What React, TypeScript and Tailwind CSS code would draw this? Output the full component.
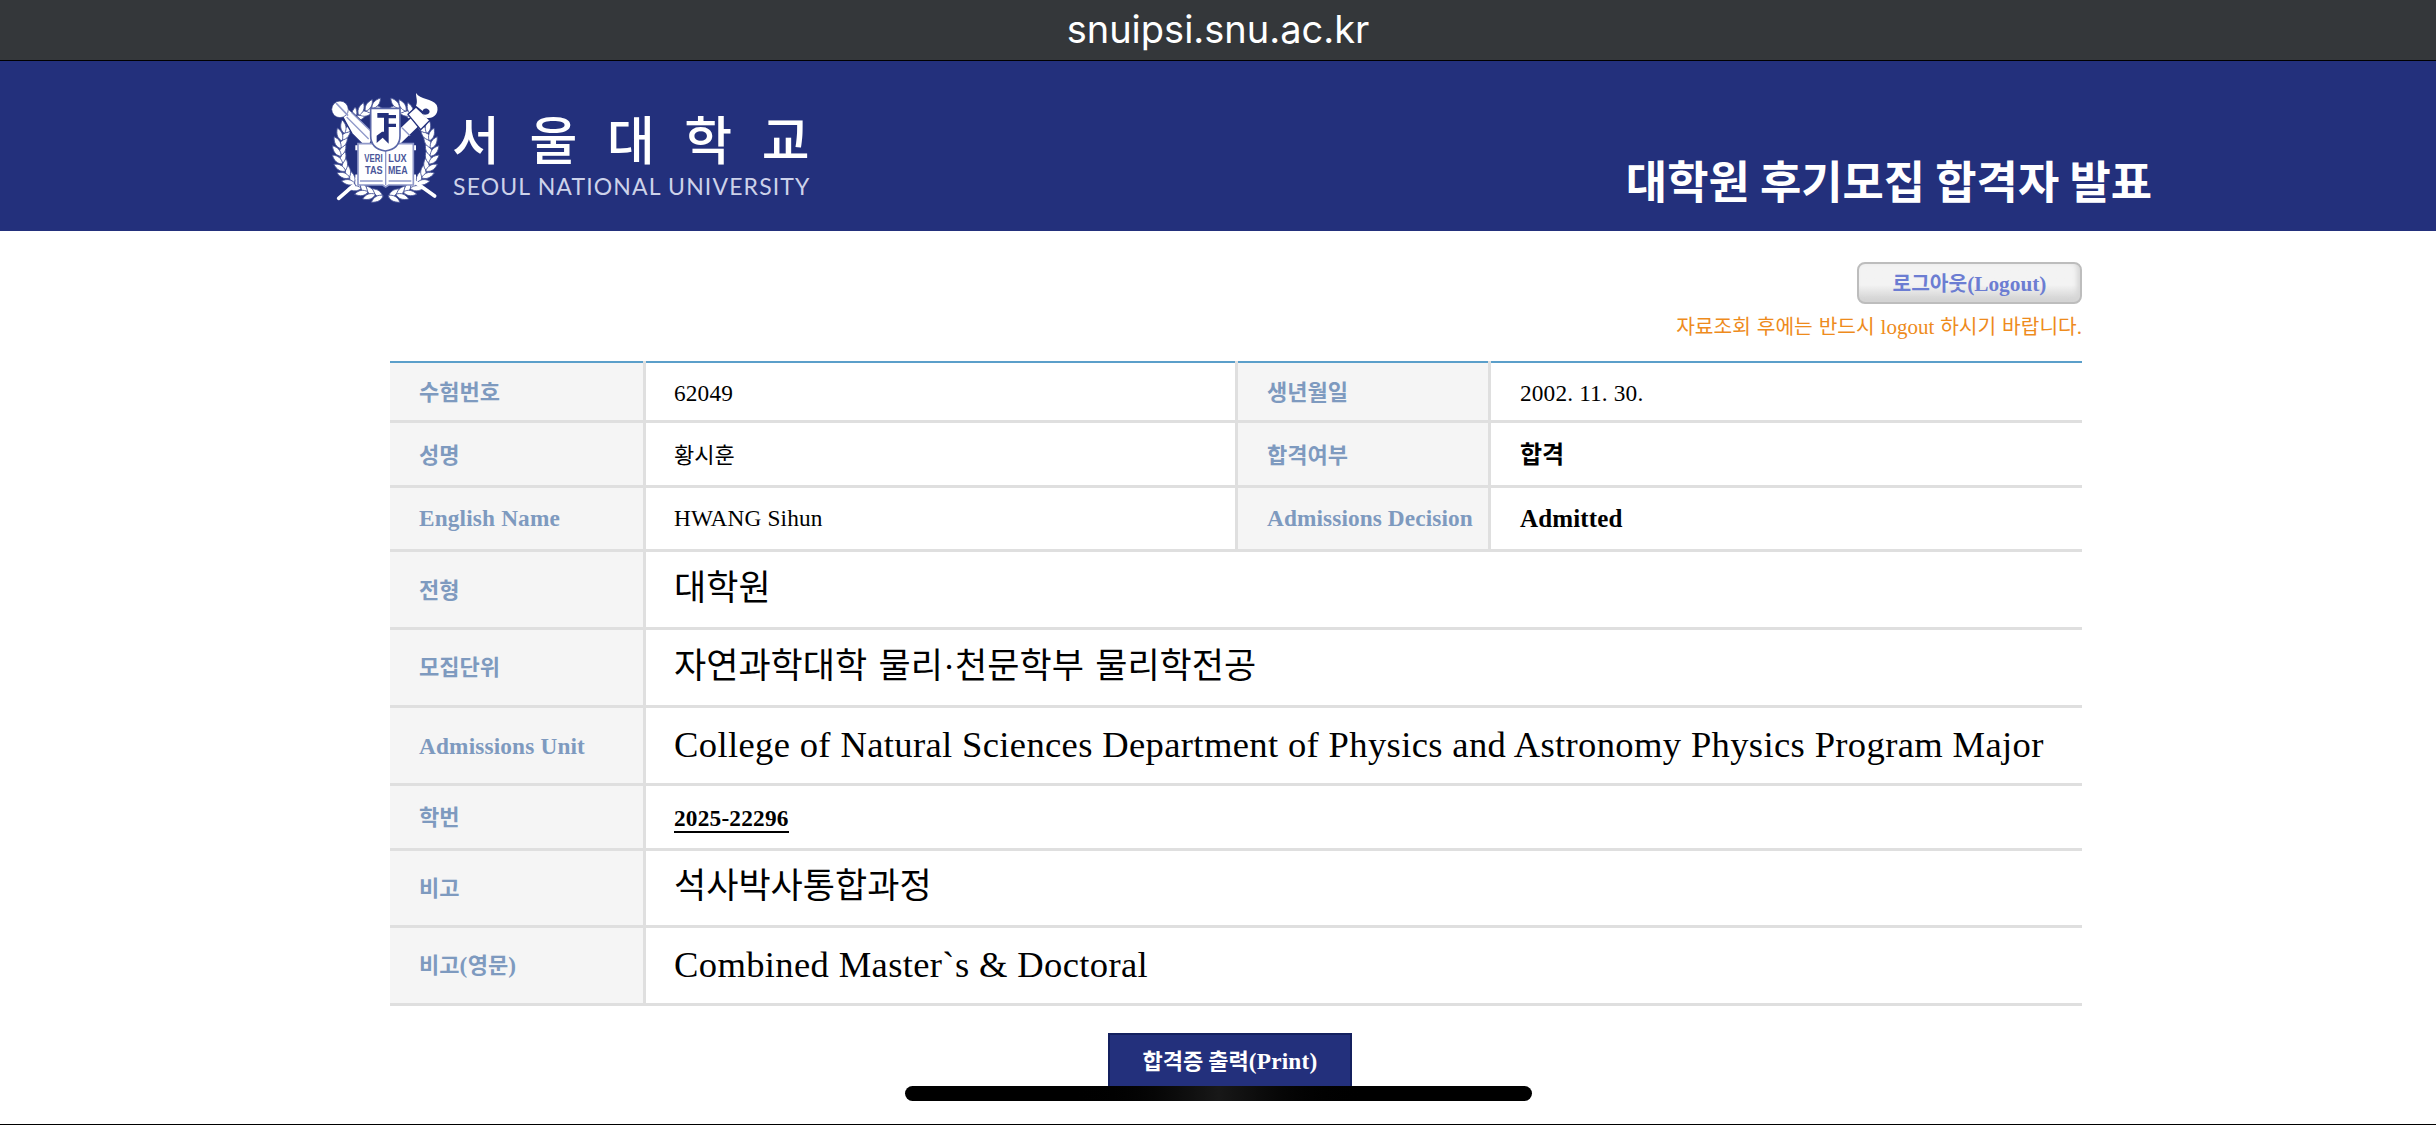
import type { ReactNode } from "react";

type TextProps = { c?: string; children: ReactNode };

function Ko({ c = "", children }: TextProps) {
  return <span className={`font-['Noto_Sans_CJK_KR',sans-serif] whitespace-pre ${c}`}>{children}</span>;
}

function En({ c = "", children }: TextProps) {
  return <span className={`font-['Liberation_Serif',serif] whitespace-pre ${c}`}>{children}</span>;
}

// One laurel leaf; `a` is the angle along the wreath, measured from its foot.
function Leaf({ a, side }: { a: number; side: number }) {
  const t = (a * Math.PI) / 180;
  const x = 197 - 137 * Math.sin(t);
  const y = 198 + 136 * Math.cos(t);
  return (
    <path
      d="M0 5C-11 -5 -11 -20 -1 -36C10 -22 10 -8 0 5Z"
      transform={`translate(${x} ${y}) rotate(${a - 90 + side * 34})`}
    />
  );
}

const leafAngles = [5, 15, 25, 35, 45, 55, 65, 75, 85, 95, 105, 115, 125, 135, 145, 155, 164];

function Branch() {
  return (
    <g fill="#fff" stroke="#4a5699" strokeWidth="2.5">
      {leafAngles.map((a) => (
        <g key={a}>
          <Leaf a={a} side={1} />
          <Leaf a={a} side={-1} />
        </g>
      ))}
    </g>
  );
}

function Emblem() {
  return (
    <svg viewBox="0 0 390 375" className="h-[125px] w-[130px] shrink-0">
      <Branch />
      <g transform="translate(394 0) scale(-1 1)">
        <Branch />
      </g>
      <g strokeLinecap="round">
        <path d="M344 333L284 290" stroke="#fff" strokeWidth="11" />
        <path d="M56 340L100 302" stroke="#fff" strokeWidth="11" />
      </g>
      <path d="M80 66L164 146L150 176H126L96 146L66 92Z" fill="#fff" stroke="#23307c" strokeWidth="4" />
      <path d="M80 96L146 162M94 82L152 138" stroke="#8f98c9" strokeWidth="4" />
      <circle cx="60" cy="73" r="25" fill="#fff" stroke="#23307c" strokeWidth="2" />
      <path d="M48 54L84 92" stroke="#8f98c9" strokeWidth="5" />
      <path d="M236 184L304 118L280 90L230 138Z" fill="#fff" stroke="#23307c" strokeWidth="4" />
      <path d="M246 128L270 152" stroke="#8f98c9" strokeWidth="4" />
      <path d="M264 88L288 66L330 106L302 134Z" fill="#fff" stroke="#23307c" strokeWidth="4" />
      <path d="M288 24C300 44 336 40 350 60C360 84 340 104 318 98L308 88C324 92 334 82 326 74C318 66 308 72 308 78L288 62C294 50 288 38 288 24Z" fill="#fff" />
      <path d="M106 188H288M106 276H288" stroke="#fff" strokeWidth="15" />
      <path d="M114 176H280V300H206L197 306L188 300H114Z" fill="#fff" stroke="#8f98c9" strokeWidth="5" />
      <path d="M197 180V300M120 288H188M206 288H274" stroke="#8f98c9" strokeWidth="4" fill="none" />
      <path
        d="M152 70H240V152C240 180 220 194 196 198C172 194 152 180 152 152Z"
        fill="#fff"
        stroke="#5a67a8"
        strokeWidth="5"
      />
      <path
        d="M172 84H206V176L188 158L170 174V152L186 140H192V98H172ZM206 90H228V100H206ZM206 116H228V126H206Z"
        fill="#23307c"
      />
      <g fill="#4a5699" fontFamily="Liberation Sans, sans-serif" fontWeight="700" fontSize="34">
        <text x="133" y="232" textLength="55" lengthAdjust="spacingAndGlyphs">VERI</text>
        <text x="205" y="232" textLength="55" lengthAdjust="spacingAndGlyphs">LUX</text>
        <text x="135" y="266" textLength="53" lengthAdjust="spacingAndGlyphs">TAS</text>
        <text x="204" y="266" textLength="59" lengthAdjust="spacingAndGlyphs">MEA</text>
      </g>
    </svg>
  );
}

const SMALL_KO = "text-[22px]";
const SMALL_EN = "text-[23.3px] tracking-[0.15px]";
const BIG_KO = "text-[35px] [word-spacing:3.5px]";
const BIG_EN = "text-[36.6px] tracking-[0.35px]";

const HALF = "w-[592px] border-r-[3px] border-[#dfdfdf] pl-[28px]";
const SECOND = "w-[253px]";
const LAST = "flex-1 pl-[29px]";

function Label({ children, c = "w-[256px]" }: TextProps) {
  return (
    <div
      className={`flex shrink-0 items-center border-r-[3px] border-[#dfdfdf] bg-[#f5f5f5] pl-[29px] font-bold text-[#7e9abf] ${c}`}
    >
      {children}
    </div>
  );
}

function Value({ children, c = "flex-1 pl-[28px]" }: TextProps) {
  return <div className={`flex items-center text-black ${c}`}>{children}</div>;
}

function Row({ h, children }: { h: string; children: ReactNode }) {
  return <div className={`flex border-b-[3px] border-[#dfdfdf] ${h}`}>{children}</div>;
}

export default function App() {
  return (
    <div className="relative flex h-[1125px] w-[2436px] flex-col overflow-hidden border-b border-black bg-white">
      <div className="flex h-[61px] shrink-0 justify-center border-b border-black bg-[#34373a] pt-[4px] font-['Inter',sans-serif] text-[38px] leading-[50px] text-white">
        <span>snuipsi.snu.ac.kr</span>
      </div>

      <header className="flex h-[170px] shrink-0 justify-between bg-[#23307c] pr-[284px] pl-[320px] text-white">
        <div className="flex pt-[24px]">
          <Emblem />
          <div className="flex flex-col pt-[18px] pl-[2px]">
            <Ko c="text-[52px] leading-[70px] font-medium tracking-[29.6px]">서울대학교</Ko>
            <span className="-mt-px pl-px font-['Lato',sans-serif] text-[23px] leading-[28px] tracking-[1.15px] whitespace-pre text-[#cdd2ea]">
              SEOUL NATIONAL UNIVERSITY
            </span>
          </div>
        </div>
        <div className="pt-[87px]">
          <Ko c="text-[44.9px] leading-[64px] font-bold">대학원 후기모집 합격자 발표</Ko>
        </div>
      </header>

      <main className="ml-[390px] flex w-[1692px] flex-col">
        <div className="mt-[31px] flex h-[42px] w-[225px] items-baseline justify-center self-end rounded-[8px] border-2 border-[#bdbdbd] bg-linear-to-b from-[#f3f3f3] from-55% to-[#cfcfcf] pt-[2px] leading-[32px] font-bold text-[#6c7dd2] shadow-[inset_-3px_-2px_5px_#d6d6d6]">
          <Ko c="text-[20.3px]">로그아웃</Ko>
          <En c="text-[21.3px]">(Logout)</En>
        </div>
        <div className="mt-[6px] flex h-[32px] items-baseline justify-end text-[#ee8b1c] [word-spacing:1.4px]">
          <Ko c="text-[20.3px]">자료조회 후에는 반드시 </Ko>
          <En c="text-[21px]">logout</En>
          <Ko c="text-[20.3px]"> 하시기 바랍니다</Ko>
          <En c="text-[21px]">.</En>
        </div>

        <div className="mt-[19px]">
          <div className="flex h-[2px] bg-[#5b9fca]">
            <div className="w-[256px] border-r-[3px] border-[#dfdfdf]" />
            <div className="w-[592px] border-r-[3px] border-[#dfdfdf]" />
            <div className="w-[253px] border-r-[3px] border-[#dfdfdf]" />
          </div>
          <Row h="h-[60px]">
            <Label><Ko c={`${SMALL_KO} pb-[2px]`}>수험번호</Ko></Label>
            <Value c={HALF}><En c={`${SMALL_EN} pt-[3px]`}>62049</En></Value>
            <Label c={SECOND}><Ko c={`${SMALL_KO} pb-[2px]`}>생년월일</Ko></Label>
            <Value c={LAST}><En c={`${SMALL_EN} pt-[3px]`}>2002. 11. 30.</En></Value>
          </Row>
          <Row h="h-[65px]">
            <Label><Ko c={`${SMALL_KO} pb-[2px]`}>성명</Ko></Label>
            <Value c={HALF}><Ko c={`${SMALL_KO} pb-[2px]`}>황시훈</Ko></Value>
            <Label c={SECOND}><Ko c={`${SMALL_KO} pb-[2px]`}>합격여부</Ko></Label>
            <Value c={LAST}><Ko c="pb-[3px] text-[24px] font-bold">합격</Ko></Value>
          </Row>
          <Row h="h-[64px]">
            <Label><En c={SMALL_EN}>English Name</En></Label>
            <Value c={HALF}><En c={SMALL_EN}>HWANG Sihun</En></Value>
            <Label c={SECOND}><En c="text-[23.3px] tracking-[0.1px]">Admissions Decision</En></Label>
            <Value c={LAST}><En c="text-[25px] font-bold tracking-[0.15px]">Admitted</En></Value>
          </Row>
          <Row h="h-[78px]">
            <Label><Ko c={`${SMALL_KO} pb-[3px]`}>전형</Ko></Label>
            <Value><Ko c={`${BIG_KO} pb-[8px]`}>대학원</Ko></Value>
          </Row>
          <Row h="h-[78px]">
            <Label><Ko c={`${SMALL_KO} pb-[4px]`}>모집단위</Ko></Label>
            <Value>
              <Ko c={`${BIG_KO} pb-[9px]`}>자연과학대학 물리</Ko>
              <En c="text-[36.3px]">·</En>
              <Ko c={`${BIG_KO} pb-[9px]`}>천문학부 물리학전공</Ko>
            </Value>
          </Row>
          <Row h="h-[78px]">
            <Label><En c={`${SMALL_EN} pt-[2px]`}>Admissions Unit</En></Label>
            <Value>
              <En c={BIG_EN}>College of Natural Sciences Department of Physics and Astronomy Physics Program Major</En>
            </Value>
          </Row>
          <Row h="h-[65px]">
            <Label><Ko c={`${SMALL_KO} pb-[3px]`}>학번</Ko></Label>
            <Value>
              <En c="mt-[3px] border-b-2 border-black text-[23.3px] leading-[26px] font-bold tracking-[0.2px]">2025-22296</En>
            </Value>
          </Row>
          <Row h="h-[77px]">
            <Label><Ko c={`${SMALL_KO} pb-[3px]`}>비고</Ko></Label>
            <Value><Ko c={`${BIG_KO} pb-[9px]`}>석사박사통합과정</Ko></Value>
          </Row>
          <Row h="h-[78px]">
            <Label>
              <Ko c={`${SMALL_KO} pb-[4px]`}>비고</Ko>
              <En c="pb-px text-[23.3px] tracking-[0.5px]">(</En>
              <Ko c={`${SMALL_KO} pb-[4px]`}>영문</Ko>
              <En c="pb-px text-[23.3px]">)</En>
            </Label>
            <Value><En c={BIG_EN}>Combined Master`s &amp; Doctoral</En></Value>
          </Row>
        </div>

        <div className="mt-[27px] ml-[718px] flex h-[60px] w-[244px] items-baseline justify-center border-2 border-[#14205f] bg-[#23307c] pt-[8px] leading-[32px] font-bold text-white">
          <Ko c="text-[22px]">합격증 출력</Ko>
          <En c="text-[23.3px] tracking-[0.2px]">(Print)</En>
        </div>
      </main>

      <div className="absolute top-[1086px] left-[905px] h-[15px] w-[627px] rounded-[8px] bg-linear-to-r from-black from-25% via-[#181818] via-50% to-black to-75%" />
    </div>
  );
}
